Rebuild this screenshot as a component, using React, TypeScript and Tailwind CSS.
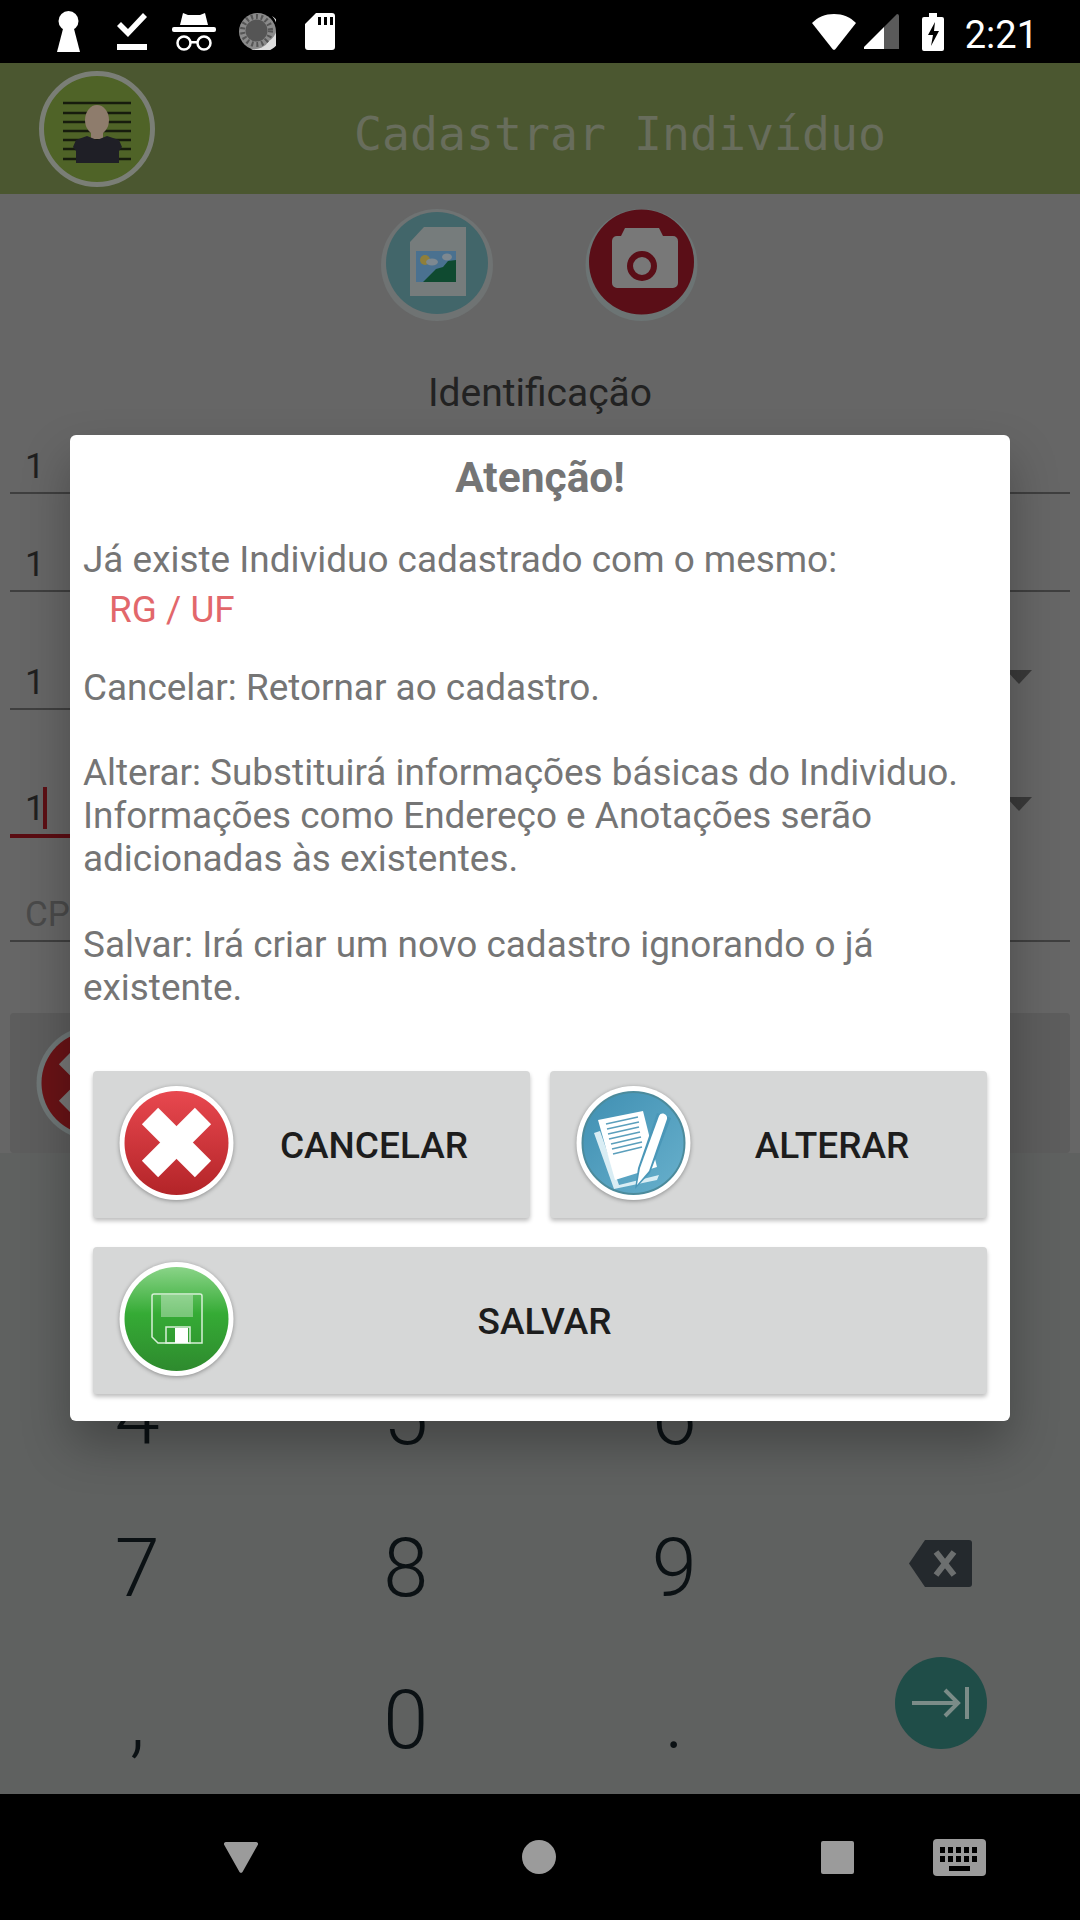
import React from "react";

// cores ja escurecidas pelo scrim do dialog

function StatusLeft() {
  return (
    <div className="flex items-center pl-[57px]">
      <svg width="23" height="41" viewBox="0 0 23 41" fill="#fff">
        <circle cx="11.5" cy="10" r="10" />
        <path d="M7 14h9l7 27H0z" />
      </svg>
      <svg className="ml-[37px]" width="30" height="38" viewBox="0 0 30 38" fill="#fff">
        <path d="M0 13l4-4 7 7L26 0l4 4-19 20z" />
        <rect x="0" y="31" width="30" height="6" />
      </svg>
      <svg className="ml-[25px]" width="44" height="40" viewBox="0 0 44 40" fill="#fff">
        <path d="M11 1l5 2h12l5-2 3 12H8z" />
        <rect x="0" y="15" width="44" height="5" rx="2" />
        <circle cx="12" cy="31" r="6.5" fill="none" stroke="#fff" strokeWidth="2.5" />
        <circle cx="32" cy="31" r="6.5" fill="none" stroke="#fff" strokeWidth="2.5" />
        <rect x="18" y="29" width="8" height="2.5" />
      </svg>
      <svg className="ml-[23px]" width="37" height="37" viewBox="0 0 37 37">
        <circle cx="18.5" cy="18.5" r="18.5" fill="#8b8b8b" />
        <path d="M33 3a18.5 18.5 0 0 1-21 33 17 17 0 0 0 18-8 16 16 0 0 0 3-25z" fill="#ddd" />
        <circle cx="17.5" cy="17.5" r="11" fill="#555" />
        <circle cx="17.5" cy="17.5" r="14" fill="none" stroke="#555" strokeWidth="5" strokeDasharray="2 3" />
      </svg>
      <svg className="ml-[29px]" width="30" height="37" viewBox="0 0 30 37" fill="#fff">
        <path fillRule="evenodd" d="M11 0h16a3 3 0 0 1 3 3v31a3 3 0 0 1-3 3H3a3 3 0 0 1-3-3V11zM13 4v8h3V4zM19 4v8h3V4zM25 4v8h3V4z" />
      </svg>
    </div>
  );
}

function StatusRight() {
  return (
    <div className="flex items-center pr-[42px]">
      <svg width="44" height="36" viewBox="0 0 44 36" fill="#fff">
        <path d="M22 0c9 0 16 3 22 9L23.500 35a2 2 0 0 1-3 0L0 9C6 3 13 0 22 0z" />
      </svg>
      <svg className="ml-[8px]" width="35" height="35" viewBox="0 0 35 35">
        <path d="M33 0a2 2 0 0 1 2 2v33H20V13z" fill="#5a5a5a" />
        <path d="M20 13v22H1a1 1 0 0 1-1-2z" fill="#fff" />
      </svg>
      <svg className="ml-[23px]" width="22" height="38" viewBox="0 0 22 38">
        <path fillRule="evenodd" fill="#fff" d="M7 0h8v4h5a2 2 0 0 1 2 2v30a2 2 0 0 1-2 2H2a2 2 0 0 1-2-2V6a2 2 0 0 1 2-2h5z" />
        <path fill="#000" d="M13 9l-7 13h5l-2 11 8-15h-5z" />
      </svg>
      <span className="ml-[21px] pt-[6px] text-[38px] leading-none text-white">2:21</span>
    </div>
  );
}

function Avatar() {
  return (
    <svg className="ml-[39px] shrink-0" width="116" height="116" viewBox="0 0 116 116">
      <circle cx="58" cy="58" r="55.500" fill="#4f6327" stroke="#7a7e76" strokeWidth="5" />
      <g stroke="#171c0d" strokeWidth="2.500">
        {[32, 42, 51, 60, 69, 78, 88].map((y) => (
          <line key={y} x1="24" y1={y} x2="92" y2={y} />
        ))}
      </g>
      <ellipse cx="58" cy="49" rx="12" ry="15" fill="#8e7c6c" />
      <path d="M52 60h12v8H52z" fill="#8e7c6c" />
      <path d="M48 65l10 4 10-4 12 4 3 7-3 4v12H37V80l-3-4 3-7z" fill="#1f1f26" />
    </svg>
  );
}

function GalleryButton() {
  return (
    <svg width="116" height="112" viewBox="0 0 116 112">
      <circle cx="58" cy="56" r="56" fill="#6f7373" />
      <circle cx="58" cy="54" r="51" fill="#42666a" />
      <path d="M45 18h42v69H31V33z" fill="#767c7c" />
      <rect x="37" y="42" width="40" height="31" fill="#4a7190" />
      <path d="M44 73l13-13 7-2 5-6 8-1v22z" fill="#0f4a30" />
      <circle cx="46" cy="51" r="5" fill="#8f7f3a" />
      <ellipse cx="53" cy="53" rx="6" ry="3.500" fill="#7d8890" />
      <ellipse cx="68" cy="48" rx="5" ry="3.500" fill="#7d8890" />
    </svg>
  );
}

function CameraButton() {
  return (
    <svg width="113" height="112" viewBox="0 0 113 112">
      <circle cx="56.500" cy="56" r="56" fill="#6c7474" />
      <circle cx="56.500" cy="53" r="52.500" fill="#5a0e17" />
      <path d="M33 27h3l4-8h34l4 8h10a5 5 0 0 1 5 5v42a5 5 0 0 1-5 5H32a5 5 0 0 1-5-5V32a5 5 0 0 1 6-5z" fill="#787878" />
      <circle cx="57" cy="57" r="12" fill="none" stroke="#5a0e17" strokeWidth="6" />
    </svg>
  );
}

function CancelIcon() {
  return (
    <svg width="115" height="116" viewBox="0 0 115 116">
      <defs>
        <linearGradient id="red" x1="0" y1="0" x2="0" y2="1">
          <stop offset="0" stopColor="#e8484f" />
          <stop offset="1" stopColor="#b32428" />
        </linearGradient>
      </defs>
      <circle cx="57.500" cy="58" r="57" fill="#fff" />
      <circle cx="57.500" cy="58" r="52" fill="url(#red)" />
      <g stroke="#fff" strokeWidth="23">
        <line x1="31" y1="31" x2="84" y2="84" />
        <line x1="84" y1="31" x2="31" y2="84" />
      </g>
    </svg>
  );
}

function EditIcon() {
  return (
    <svg width="115" height="116" viewBox="0 0 115 116">
      <defs>
        <linearGradient id="blue" x1="0" y1="0" x2="1" y2="1">
          <stop offset="0" stopColor="#3f8fb2" />
          <stop offset="1" stopColor="#68b0cc" />
        </linearGradient>
      </defs>
      <circle cx="57.500" cy="58" r="57" fill="#fff" />
      <circle cx="57.500" cy="58" r="51" fill="url(#blue)" stroke="#4c8b9c" strokeWidth="2" />
      <path d="M18 48l6-2 19 54 40-10-2 5-43 9z" fill="#d9edf4" />
      <path d="M22 35l45-9 14 56-42 13z" fill="#fff" />
      <g stroke="#5b9fbc" strokeWidth="1.600">
        <line x1="30" y1="39" x2="62" y2="32" />
        <line x1="31" y1="44" x2="63" y2="37" />
        <line x1="32" y1="49" x2="63" y2="42" />
        <line x1="33" y1="54" x2="64" y2="47" />
        <line x1="35" y1="59" x2="65" y2="52" />
        <line x1="36" y1="64" x2="66" y2="57" />
        <line x1="37" y1="69" x2="66" y2="62" />
      </g>
      <path d="M59 104l3-21L81 28l14 5-21 55z" fill="#4a97b8" />
      <path d="M61 100l3-17 19-52c2-5 9-2 8 3L73 86z" fill="#fff" />
    </svg>
  );
}

function SaveIcon() {
  return (
    <svg width="115" height="116" viewBox="0 0 115 116">
      <defs>
        <linearGradient id="green" x1="0" y1="0" x2="0" y2="1">
          <stop offset="0" stopColor="#8ad488" />
          <stop offset="0.45" stopColor="#35ab35" />
          <stop offset="1" stopColor="#2e8a2e" />
        </linearGradient>
      </defs>
      <circle cx="57.500" cy="58" r="57" fill="#fff" />
      <circle cx="57.500" cy="58" r="52" fill="url(#green)" />
      <path d="M35 33h46a2 2 0 0 1 2 2v47H39l-6-6V35a2 2 0 0 1 2-2z" fill="none" stroke="#d8f0d8" strokeWidth="1.500" />
      <rect x="42" y="34" width="32" height="22" fill="#fff" opacity="0.35" />
      <rect x="47" y="66" width="24" height="16" fill="none" stroke="#d8f0d8" strokeWidth="1.500" />
      <rect x="56" y="67" width="13" height="15" fill="#fff" />
    </svg>
  );
}

function Field({ box, text, label, arrow, focused }: any) {
  return (
    <div className={`flex items-end ${box}`}>
      <div
        className={`relative flex-1 pb-[8px] pl-[15px] text-[35px] leading-none ${
          focused ? "border-b-[4px] border-[#5a0c12]" : "border-b-[2px] border-[#3f3f3f]"
        } ${label ? "text-[#4a4a4a]" : "text-[#1f1f1f]"}`}
      >
        {text}
        {focused && <span className="absolute top-[-4px] left-[33px] h-[42px] w-[4px] bg-[#5c0f14]" />}
      </div>
      {arrow && (
        <div className="flex w-[300px] justify-end pr-[38px]">
          <svg className={arrow} width="26" height="14" viewBox="0 0 26 14" fill="#3a3a3a">
            <path d="M0 0h26L13 14z" />
          </svg>
        </div>
      )}
    </div>
  );
}

function Key({ children }: { children?: React.ReactNode }) {
  return (
    <div className="flex items-center justify-center pt-[5px] text-[81px] leading-none font-[350] text-[#0b1114]">
      {children}
    </div>
  );
}

function DialogButton({ icon, label, textClass }: any) {
  return (
    <button className="flex h-[147px] items-center rounded-[4px] bg-[#d6d7d7] pl-[26px] shadow-[0_3px_4px_rgba(0,0,0,0.25)]">
      <div className="mb-[3px] drop-shadow-[0_1px_2px_rgba(0,0,0,0.35)]">{icon}</div>
      <span className={`flex-1 pt-[2px] text-center text-[37px] leading-none font-medium text-[#1d1d1d] ${textClass}`}>{label}</span>
    </button>
  );
}

export default function App() {
  return (
    <div className="relative flex h-[1920px] w-[1080px] flex-col overflow-hidden bg-[#666666] font-['Roboto',sans-serif]">
      <div className="flex h-[63px] shrink-0 items-center justify-between bg-black">
        <StatusLeft />
        <StatusRight />
      </div>

      <div className="flex h-[131px] shrink-0 items-center bg-[#4b5730]">
        <Avatar />
        <div className="flex-1 pt-[12px] pl-[5px] text-center font-['DejaVu_Sans_Mono',monospace] text-[46.500px] leading-none text-[#686d5c]">
          Cadastrar Indivíduo
        </div>
      </div>

      <div className="flex flex-1 flex-col">
        <div className="flex justify-center gap-[90px] pt-[15px] pr-[3px]">
          <GalleryButton />
          <CameraButton />
        </div>
        <div className="mt-[51px] h-[42px] text-center text-[39px] leading-[42px] text-[#222222]">Identificação</div>

        <div className="mx-[10px] flex flex-col">
          <Field box="h-[80px]" text="1" />
          <Field box="h-[98px]" text="1" />
          <Field box="h-[118px]" text="1" arrow="mb-[26px]" />
          <Field box="h-[128px]" text="1" arrow="mb-[27px]" focused />
          <Field box="h-[104px]" text="CPF" label />
        </div>

        <div className="mx-[10px] mt-[71px] flex h-[140px] items-center rounded-[4px] bg-[#5d5d5d] pl-[26px]">
          <svg width="115" height="116" viewBox="0 0 115 116">
            <circle cx="57.500" cy="58" r="57" fill="#6f7777" />
            <circle cx="57.500" cy="58" r="52" fill="#691316" />
            <g stroke="#787878" strokeWidth="23">
              <line x1="31" y1="31" x2="84" y2="84" />
              <line x1="84" y1="31" x2="31" y2="84" />
            </g>
          </svg>
        </div>
      </div>

      <div className="grid h-[641px] shrink-0 grid-cols-4 grid-rows-4 bg-[#5f6160] px-[3px] pt-[33px]">
        <Key>1</Key>
        <Key>2</Key>
        <Key>3</Key>
        <Key />
        <Key>4</Key>
        <Key>5</Key>
        <Key>6</Key>
        <Key />
        <Key>7</Key>
        <Key>8</Key>
        <Key>9</Key>
        <Key>
          <svg className="mr-[4px] mb-[10px]" width="63" height="47" viewBox="0 0 63 47">
            <path d="M16 0h44a3 3 0 0 1 3 3v41a3 3 0 0 1-3 3H16L0 23.500z" fill="#24292d" />
            <path d="M27 12l18 23M45 12L27 35" stroke="#6c6f6f" strokeWidth="6" />
          </svg>
        </Key>
        <Key>,</Key>
        <Key>0</Key>
        <Key>.</Key>
        <Key>
          <div className="mr-[4px] mb-[35px] flex h-[92px] w-[92px] items-center justify-center rounded-full bg-[#1f4d48]">
            <svg width="58" height="32" viewBox="0 0 58 32" fill="none" stroke="#7b8c88" strokeWidth="4">
              <path d="M0 16h46M33 3l13 13-13 13" />
              <path d="M55 0v32" />
            </svg>
          </div>
        </Key>
      </div>

      <div className="flex h-[126px] shrink-0 items-center bg-black pl-[224px]">
        <svg width="34" height="31" viewBox="0 0 34 31" fill="#9b9b9b">
          <path d="M2 0h30a2 2 0 0 1 2 2.500L18.500 30a2 2 0 0 1-3 0L0 2.500A2 2 0 0 1 2 0z" />
        </svg>
        <div className="ml-[264px] h-[34px] w-[34px] rounded-full bg-[#9b9b9b]" />
        <div className="ml-[265px] h-[33px] w-[33px] rounded-[2px] bg-[#9b9b9b]" />
        <svg className="ml-[79px]" width="53" height="37" viewBox="0 0 53 37">
          <rect width="53" height="37" rx="4" fill="#9b9b9b" />
          <g fill="#000">
            {[7, 15, 23, 31, 39].map((x) => (
              <React.Fragment key={x}>
                <rect x={x} y="8" width="5" height="6" />
                <rect x={x} y="17" width="5" height="6" />
              </React.Fragment>
            ))}
            <rect x="16" y="27" width="21" height="5" />
          </g>
        </svg>
      </div>

      {/* dialog */}
      <div className="absolute top-[435px] left-[70px] flex h-[986px] w-[940px] flex-col rounded-[6px] bg-white shadow-[0_24px_48px_rgba(0,0,0,0.28)]">
        <div className="pt-[16px] text-center text-[42.500px] leading-[54px] font-bold text-[#757575]">Atenção!</div>
        <div className="px-[13px] text-[36.900px] leading-[43px] text-[#757575]">
          <p className="mt-[33px]">Já existe Individuo cadastrado com o mesmo:</p>
          <p className="mt-[7px] pl-[26px] text-[#e2676b]">RG / UF</p>
          <p className="mt-[35px]">Cancelar: Retornar ao cadastro.</p>
          <p className="mt-[42px]">Alterar: Substituirá informações básicas do Individuo. Informações como Endereço e Anotações serão adicionadas às existentes.</p>
          <p className="mt-[43px]">Salvar: Irá criar um novo cadastro ignorando o já existente.</p>
        </div>
        <div className="mt-[62px] grid grid-cols-2 gap-x-[20px] gap-y-[29px] pr-[23px] pl-[23px]">
          <DialogButton icon={<CancelIcon />} label="CANCELAR" textClass="pr-[16px]" />
          <DialogButton icon={<EditIcon />} label="ALTERAR" textClass="pr-[14px]" />
          <div className="col-span-2 grid">
            <DialogButton icon={<SaveIcon />} label="SALVAR" textClass="pr-[132px]" />
          </div>
        </div>
      </div>
    </div>
  );
}
